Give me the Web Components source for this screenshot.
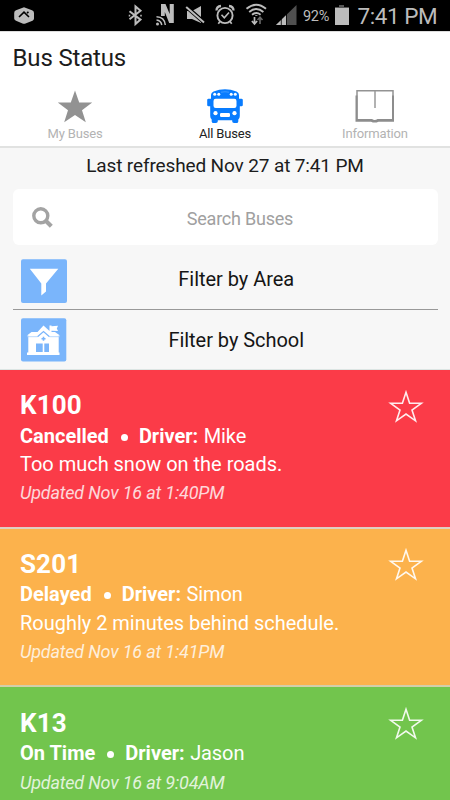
<!DOCTYPE html>
<html lang="en">
<head>
<meta charset="utf-8">
<title>Bus Status</title>
<style>
html,body{margin:0;height:100%;overflow:hidden;background:#f7f7f7}
body{font-family:Roboto,"Liberation Sans",sans-serif}
</style>
</head>
<body>
<bus-app></bus-app>
<script>
function define(name, html, setup) {
  const t = document.createElement('template');
  t.innerHTML = html;
  customElements.define(name, class extends HTMLElement {
    constructor() {
      super();
      this.attachShadow({mode: 'open'}).append(t.content.cloneNode(true));
    }
    connectedCallback() { if (setup) setup(this, this.shadowRoot); }
  });
}

define('status-bar', `
<style>
:host{display:flex;height:31px;background:#000;color:#bcbcbc;justify-content:space-between;box-sizing:border-box}
svg{display:block;flex:none}
.right{display:flex;width:323px}
.pct{width:31px;font-size:14.5px;line-height:33px;letter-spacing:-.3px;white-space:nowrap}
.time{font-size:22.5px;line-height:33px;letter-spacing:-.45px;margin-left:8.500px;width:92px;white-space:nowrap}
</style>
<svg width="40" height="31" viewBox="0 0 40 31"><path fill="#bcbcbc" d="M24 7.2 32 10.3Q34 11 34 13V18.500Q34 20 32.500 20.700L25.500 23.500Q24 24 22.500 23.500L16 20.700Q14.200 20 14.200 18.500V13Q14.200 11 16 10.300Z"/><path d="M19 17 24 12.200 29 17M27 13 28.500 12" fill="none" stroke="#000" stroke-width="1.600"/></svg>
<div class="right">
<svg width="176" height="31" viewBox="127 0 176 31" fill="none" stroke="#bcbcbc">
<path d="M129.500 11.200 140.500 19.600 135.500 24V6.500L140.500 10.800 129.500 19.300" stroke-width="2"/>
<path d="M129.500 14.700v1.700M141 14.700v1.700" stroke-width="1.500"/>
<path d="M161 16V4H165.500L169.700 14V4H173.800V23H169.200L164.800 12V16Z" fill="#bcbcbc" stroke="none"/>
<path d="M156.500 16.800Q164.500 17 165.300 25M156.500 20Q161 20.500 161.800 25" stroke-width="1.500"/><circle cx="157.500" cy="24" r="1.500" fill="#bcbcbc" stroke="none"/>
<path d="M187 11H192L201 6V23L192 19H187Z" fill="#bcbcbc" stroke="none"/>
<path d="M186 6.400 204.500 22.700" stroke="#000" stroke-width="4"/><path d="M186.200 7 204 22.600" stroke-width="2"/>
<circle cx="225" cy="15.500" r="7.600" stroke-width="1.900"/><path d="M221.500 14.800 224.300 17.800 229 12.500" stroke-width="1.600"/><path d="M216.500 10.500Q216.500 6.500 221 6M233.500 10.500Q233.500 6.500 229 6" stroke-width="2.300"/><path d="M220 21.500 218.300 23.700M230 21.500 231.700 23.700" stroke-width="1.700"/>
<path d="M246.500 8.800Q256.300.500 266 8.800M249.200 11.900Q256.300 6 263.400 11.900M252 14.700Q256.300 11.400 260.600 14.700" stroke-width="1.900"/><path d="M256.300 15v.8" stroke-width="2.200"/>
<path d="M254.500 17v6.500M251.900 21 254.500 24 257.100 21" stroke-width="1.700"/><path stroke="#696969" d="M260 24v-6M257.500 20 260 17.300 262.500 20" stroke-width="1.600"/>
<path d="M296.500 5V25H276Z" fill="#505050" stroke="none"/><path d="M286 15.200V25H276Z" fill="#bcbcbc" stroke="none"/><path d="M281.300 18V25M286.500 14V25" stroke="#000" stroke-width=".8"/>
</svg>
<div class="pct">92%</div>
<svg width="15" height="31" viewBox="334 0 15 31"><path d="M339 5h5v2h5v2h-14V7h4Z" fill="#555"/><path d="M335 8H349V25H335Z" fill="#bcbcbc"/></svg>
<div class="time">7:41 PM</div>
</div>`);

define('app-tab', `
<style>
:host{display:flex;flex:1;flex-direction:column;align-items:center;color:#b3b3b3;font-size:13px;line-height:18px;letter-spacing:-.16px}
:host([active]){color:#222}
.i{height:38px;display:block}
</style><slot name="icon" class="i"></slot><span><slot></slot></span>`);

define('app-header', `
<style>
:host{display:block;background:#fff;height:114px;border-top:1px solid #ddd;border-bottom:2px solid #e1e2e1}
h1{font-size:24px;line-height:28px;font-weight:400;letter-spacing:-.18px;color:#1c1c1c;margin:0;padding:12px 0 0 12.600px}
nav{display:flex;padding-top:15px}
svg{display:block}
</style>
<h1>Bus Status</h1>
<nav>
<app-tab><svg slot="icon" width="40" height="38" viewBox="55 87 40 38"><path fill="#929292" d="M75 90.500 79.200 102.600H92.200L82 110.200 85.800 122.300 75 114.900 64.200 122.300 68 110.200 57.800 102.600H70.800Z"/></svg>My Buses</app-tab>
<app-tab active><svg slot="icon" width="40" height="38" viewBox="205 87 40 38"><path fill="#087cff" d="M211 95Q211 92.500 213.500 91.500Q225 87.200 236.500 91.500Q239 92.500 239 95V98.800H241.500Q242.800 98.800 242.800 100V105Q242.800 106.200 241.500 106.200H239.800V116Q239.800 118 238.300 119.500V121.500Q238.300 123 236.500 123H234Q232.200 123 232.200 121.200V120.300H217.800V121.200Q217.800 123 216 123H213.500Q211.700 123 211.700 121.500V119.500Q210.200 118 210.200 116V106.200H208.500Q207.200 106.200 207.200 105V100Q207.200 98.800 208.500 98.800H211Z"/><g fill="#fff"><rect x="213.500" y="98.700" width="23" height="9.300" rx="2.200"/><rect x="220" y="113" width="10" height="4" rx="1.200"/><circle cx="215.500" cy="113.200" r="2.100"/><circle cx="234.500" cy="113.200" r="2.100"/><circle cx="214.700" cy="94.200" r="1.500"/><circle cx="218.800" cy="94.200" r="1.500"/><circle cx="231.200" cy="94.200" r="1.500"/><circle cx="235.300" cy="94.200" r="1.500"/></g><path d="M221 92.200Q225 91.300 229 92.200" fill="none" stroke="#3f9bff"/></svg>All Buses</app-tab>
<app-tab><svg slot="icon" width="42" height="38" viewBox="354 87 42 38"><path d="M357 119.500V90.800H393V119.500" fill="none" stroke="#939393" stroke-width="1.500"/><path d="M355.500 95.500H357.500V119H372Q374.700 121 377.500 119H392V95.500H394V121.700H378.500Q374.700 123.500 371 121.700H355.500Z" fill="#8d8d8d"/><path d="M375 91V108" stroke="#999" stroke-width="1.500"/></svg>Information</app-tab>
</nav>`);

define('search-box', `
<style>
:host{display:flex;align-items:center;height:56px;background:#fff;border-radius:6px;margin:0 12.500px;color:#a0a0a0;font-size:18px;letter-spacing:-.22px}
svg{flex:none;margin-left:18.500px}
span{flex:1;text-align:center;padding-right:14.500px;padding-top:3px;padding-left:2px}
</style>
<svg width="24" height="24" viewBox="31 205.200 24 24" fill="none" stroke="#a3a3a3"><circle cx="40.800" cy="216" r="7" stroke-width="3.400"/><path d="M46 221.200 51.300 226.500" stroke-width="4.200"/></svg>
<span><slot></slot></span>`);

define('filter-row', `
<style>
:host{display:flex;align-items:center;margin:0 12.500px;box-sizing:border-box;color:#151515;font-size:20px;letter-spacing:-.04px}
.i{display:block;margin-left:8.500px;width:46px;flex:none}
span{flex:1;text-align:center;padding-right:32px;margin-top:var(--text-shift,0)}
</style>
<slot name="icon" class="i"></slot><span><slot></slot></span>`);

define('bus-card', `
<style>
:host{display:flex;justify-content:space-between;box-sizing:border-box;height:158.700px;padding:19.800px 25px 0 20px;color:#fff;border-bottom:2px solid #dfcfc2;white-space:nowrap}
h2{font-size:26px;line-height:31px;margin:0;font-weight:700;letter-spacing:.1px}
.s{font-size:20px;line-height:29px;display:flex}
.text{padding-top:.5px}
b{font-weight:700}
.s{padding-top:var(--status-gap,0px)}
.s i{width:7px;height:7px;border-radius:50%;background:#fff;margin:12px 11px 0 12px}
.s .n{margin-left:5.500px;letter-spacing:-.1px}
p{margin:calc(0px - var(--status-gap,0px)) 0 0;font-size:20px;line-height:29px;letter-spacing:-.02px}
.u{font-size:18px;line-height:28px;font-style:italic;opacity:.8;letter-spacing:-.18px}
.s + .u{padding-top:1px}
svg{flex:none;margin-top:-1px}
</style>
<div class="text"><h2></h2><div class="s"><b class="st"></b><i></i><b>Driver:</b><span class="n"></span></div><p></p><div class="u"></div></div>
<svg width="38" height="36" viewBox="387 389 38 36"><path d="M406 392.300 409.600 403.300H421.300L412 410 415.500 420.800 406 414 396.500 420.800 400 410 390.700 403.300H402.400Z" fill="none" stroke="#fff" stroke-opacity=".9" stroke-width="1.600"/></svg>`,
(el, r) => {
  const d = el.dataset;
  r.querySelector('h2').textContent = d.bus;
  r.querySelector('.st').textContent = d.status;
  r.querySelector('.n').textContent = d.driver;
  const p = r.querySelector('p');
  if (d.note) p.textContent = d.note; else if (p) p.remove();
  r.querySelector('.u').textContent = 'Updated ' + d.updated;
});

define('bus-app', `
<style>
:host{display:flex;flex-direction:column;width:450px;height:800px;overflow:hidden;background:#f7f7f7}
:host>*{flex-shrink:0}
.r{font-size:19px;line-height:22px;letter-spacing:-.13px;text-align:center;color:#1c1c1c;padding:7px 0 12px}
hr{width:425px;height:1px;border:0;margin:0 auto;background:#999}
.list{border-top:1px solid #dce5e3}
svg{display:block}
</style>
<status-bar></status-bar>
<app-header></app-header>
<div class="r">Last refreshed Nov 27 at 7:41 PM</div>
<search-box>Search Buses</search-box>
<filter-row style="height:64px;padding-top:8px;--text-shift:-4px"><svg slot="icon" width="46" height="44" viewBox="21 259 46 44"><rect x="21" y="259.300" width="46" height="43.700" rx="2" fill="#7ab5fb"/><path fill="#fff" d="M29.800 268.800H58.300L46 283.500V291.500L41.300 295.500V283.500Z"/></svg>Filter by Area</filter-row>
<hr>
<filter-row style="height:59px;padding-top:1px;--text-shift:-1px"><svg slot="icon" width="46" height="44" viewBox="21 318 46 44"><rect x="21" y="318.300" width="45.300" height="43.300" rx="2" fill="#7ab5fb"/><path fill="#fff" d="M27 335.500 31.500 332H37.500L43.500 325.500 49.500 331V325.500H51.500V326.300L58 325.800 56.800 328.500 58 331 51.500 330.800V332H55L60 335.500H58.700V352.500H59.500V355H27V352.500H28.300V335.500Z"/><path d="M37.500 336.800 43.500 331.500 49.500 336.800" fill="none" stroke="#7ab5fb" stroke-width="1.200"/><path d="M27 336.700H37M50 336.700H60" stroke="#a8cffc" stroke-width=".8"/><path d="M43.500 336.700v4M41.500 338.700h4" stroke="#7ab5fb" stroke-width="1.600"/><path d="M36 343.500H42.700V352H36ZM44.300 343.500H49V352H44.300Z" fill="#7ab5fb"/></svg>Filter by School</filter-row>
<div class="list">
<bus-card style="background:#fb3b48;--status-gap:.6px" data-bus="K100" data-status="Cancelled" data-driver="Mike" data-note="Too much snow on the roads." data-updated="Nov 16 at 1:40PM"></bus-card>
<bus-card style="background:#fcb24c;border-color:#d2ceaa" data-bus="S201" data-status="Delayed" data-driver="Simon" data-note="Roughly 2 minutes behind schedule." data-updated="Nov 16 at 1:41PM"></bus-card>
<bus-card style="background:#72c54d" data-bus="K13" data-status="On Time" data-driver="Jason" data-updated="Nov 16 at 9:04AM"></bus-card>
</div>`);
</script>
</body>
</html>
